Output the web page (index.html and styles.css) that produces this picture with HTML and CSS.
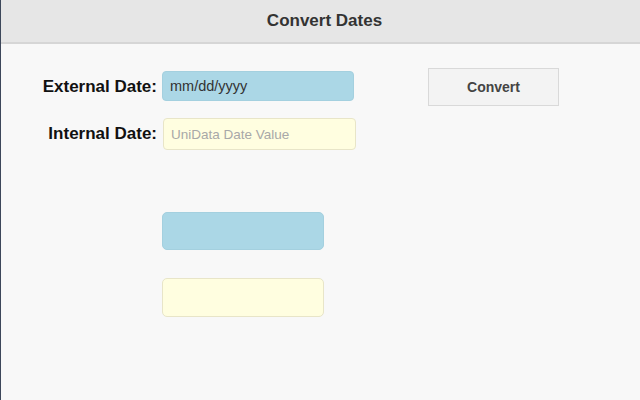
FILE: index.html
```html
<!DOCTYPE html>
<html lang="en">
<head>
<meta charset="utf-8">
<title>Convert Dates</title>
<link rel="stylesheet" href="styles.css">
</head>
<body>
<div class="page">
  <header class="header">
    <h1 class="title">Convert Dates</h1>
  </header>
  <main class="main">
    <div class="row">
      <label class="label" for="ext">External Date:</label>
      <input id="ext" class="field field-blue field-top" type="text" value="mm/dd/yyyy">
      <button class="btn" type="button">Convert</button>
    </div>
    <div class="row row-second">
      <label class="label" for="int">Internal Date:</label>
      <input id="int" class="field field-yellow field-bottom" type="text" placeholder="UniData Date Value">
    </div>
    <div class="box box-blue"></div>
    <div class="box box-yellow"></div>
  </main>
</div>
</body>
</html>
```

FILE: styles.css
```css
html, body {
  margin: 0;
  padding: 0;
  height: 100%;
}
body {
  background: #f8f8f8;
  font-family: "Liberation Sans", Arial, sans-serif;
}
.page {
  min-height: 100%;
  border-left: 1px solid #3d475a;
  box-sizing: border-box;
}
.header {
  height: 42px;
  background: #e6e6e6;
  border-bottom: 2px solid #d6d6d6;
  display: flex;
  align-items: center;
  justify-content: center;
}
.title {
  margin: 0;
  font-size: 17px;
  font-weight: bold;
  color: #333;
  padding-left: 8px;
}
.main {
  padding-top: 24px;
  display: flex;
  flex-direction: column;
}
.row {
  display: flex;
  align-items: center;
}
.row-second {
  margin-top: 12px;
}
.label {
  width: 156px;
  text-align: right;
  font-size: 17px;
  font-weight: bold;
  color: #111;
  margin-right: 5px;
  flex: none;
}
.field {
  box-sizing: border-box;
  border-radius: 4px;
  font-family: "Liberation Sans", Arial, sans-serif;
  padding: 0 7px;
  outline: none;
}
.field-top {
  width: 192px;
  height: 30px;
  margin-top: -2px;
  font-size: 14.5px;
  color: #333;
}
.field-bottom {
  width: 193px;
  height: 32px;
  margin-left: 1px;
  font-size: 13.5px;
  color: #333;
}
.field-bottom::placeholder {
  color: #a8a8a8;
}
.field-blue {
  background: #abd7e6;
  border: 1px solid #a4d0df;
}
.field-yellow {
  background: #fffee0;
  border: 1px solid #e8e5c8;
}
.btn {
  margin-left: 74px;
  width: 131px;
  height: 38px;
  background: #f3f3f3;
  border: 1px solid #d9d9d9;
  border-radius: 0;
  font-family: "Liberation Sans", Arial, sans-serif;
  font-size: 14px;
  font-weight: bold;
  color: #444;
  padding: 0;
}
.box {
  margin-left: 161px;
  width: 162px;
  box-sizing: border-box;
  border-radius: 5px;
}
.box-blue {
  margin-top: 62px;
  height: 38px;
  background: #abd7e6;
  border: 1px solid #a4d0df;
}
.box-yellow {
  margin-top: 28px;
  height: 39px;
  background: #fffee0;
  border: 1px solid #e8e5c8;
}
```
